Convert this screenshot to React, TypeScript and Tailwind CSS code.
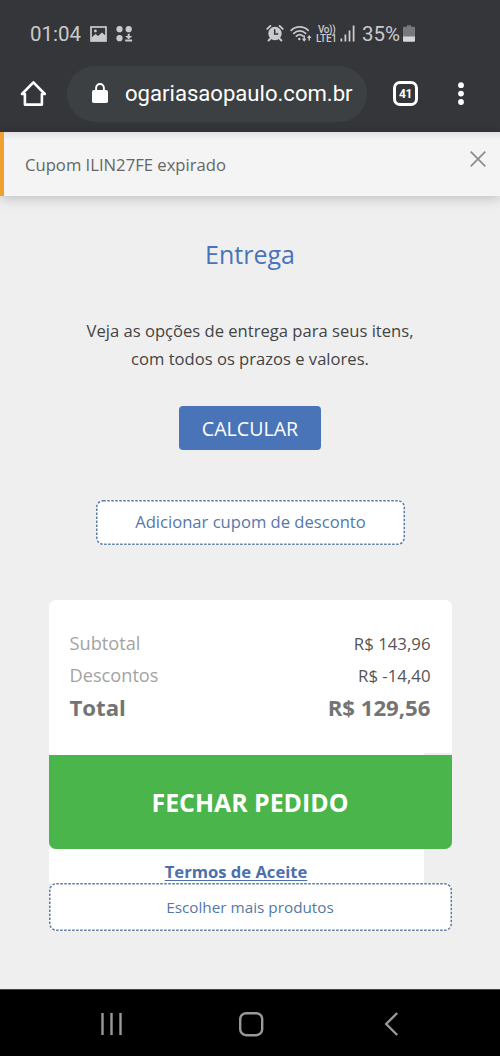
import { ReactNode } from "react";

function ImageIcon() {
  return (
    <svg className="ml-[9px] h-4 w-[17px]" viewBox="0 0 17 16" fill="none">
      <rect x="1" y="1" width="15" height="14" stroke="#c9cacc" strokeWidth="1.7" />
      <path d="M1.5 11.5 5.5 8l2.5 2 4-3.5 4 3.5v5H1.5Z" fill="#c9cacc" />
      <circle cx="5.4" cy="5" r="1.4" fill="#c9cacc" />
    </svg>
  );
}

function AppsIcon() {
  return (
    <svg className="ml-[9px] h-[17px] w-[17px]" viewBox="0 0 17 17" fill="#c9cacc">
      <circle cx="3.5" cy="3.2" r="3.1" />
      <circle cx="12.7" cy="3.2" r="3.1" />
      <circle cx="3.5" cy="12.2" r="3.1" />
      <path d="M11.7 7.8h2v2.2h2.6l-3.6 3.2-3.6-3.2h2.6ZM9.3 13.5h6.8v1.9H9.3Z" />
    </svg>
  );
}

function AlarmIcon() {
  return (
    <svg className="h-[18px] w-[18px]" viewBox="0 0 18 18" fill="none" stroke="#c9cacc" strokeLinecap="round">
      <circle cx="9" cy="8.5" r="6.7" fill="#c9cacc" stroke="none" />
      <path d="M1.3 3.9 4.4 0.9M13.6 0.9l3.1 3M2.6 15.5l2-2M15.4 15.5l-2-2" strokeWidth="1.9" />
      <path d="M8.7 4.7v4.2h3" stroke="#35363a" strokeWidth="1.5" />
    </svg>
  );
}

function WifiIcon() {
  return (
    <svg className="ml-[6px] h-[18px] w-[22px]" viewBox="0 0 22 18" fill="none" stroke="#c9cacc" strokeWidth="1.7" strokeLinecap="round">
      <path d="M1.2 5.3C6 .7 13.4.7 18.2 5.3M3.8 8.3c3.4-3.3 8.4-3.3 11.8 0M6.4 11.2c1.9-1.7 4.7-1.7 6.5-.2" />
      <circle cx="9.3" cy="14" r="1.2" fill="#c9cacc" stroke="none" />
      <path d="M14.2 11v4" strokeWidth="1.5" />
      <path d="M11.9 13.8h4.6L14.2 16.8Z" fill="#c9cacc" stroke="none" />
      <path d="M19.2 15v-3" strokeWidth="1.5" />
      <path d="M16.9 12.9h4.6L19.2 10Z" fill="#c9cacc" stroke="none" />
    </svg>
  );
}

function SignalIcon() {
  return (
    <svg className="ml-[3px] h-[18px] w-[16px]" viewBox="0 0 16 18" fill="#c9cacc">
      <rect x="0.5" y="13.5" width="1.8" height="3" />
      <rect x="4.5" y="9.5" width="1.8" height="7" />
      <rect x="8.6" y="5.5" width="1.8" height="11" />
      <rect x="12.7" y="0.5" width="1.8" height="16" />
    </svg>
  );
}

function BatteryIcon() {
  return (
    <svg className="ml-[3px] h-[18px] w-[12px]" viewBox="0 0 12 18">
      <path d="M4 .2h4v1.6h3a1 1 0 0 1 1 1V12H0V2.8a1 1 0 0 1 1-1h3Z" fill="#77787b" />
      <path d="M0 11.5h12v4.2a1 1 0 0 1-1 1H1a1 1 0 0 1-1-1Z" fill="#d6d7d9" />
    </svg>
  );
}

function StatusBar() {
  return (
    <div className="flex h-[60px] items-center pt-2 pl-[30px] font-[Roboto,sans-serif] text-[#c9cacc]">
      <span className="w-[51px] text-[20.5px] leading-none">01:04</span>
      <ImageIcon />
      <AppsIcon />
      <div className="ml-[133px] flex items-center">
        <AlarmIcon />
        <WifiIcon />
        <div className="ml-[4px] flex w-[21px] flex-col text-[10px] leading-[9px] font-medium whitespace-nowrap">
          <span className="pl-[2px] tracking-[-0.4px]">Vo))</span>
          <span className="tracking-[-0.2px]">LTE1</span>
        </div>
        <SignalIcon />
        <span className="ml-[6px] w-[38px] text-[20.5px] leading-none">35%</span>
        <BatteryIcon />
      </div>
    </div>
  );
}

function BrowserBar() {
  return (
    <div className="flex h-[72px] items-center pb-[5px] pl-[20px] font-[Roboto,sans-serif] text-white">
      <svg className="h-[27px] w-[27px]" viewBox="0 0 27 27" fill="none" stroke="#fff" strokeWidth="2.6" strokeLinejoin="round">
        <path d="M2 14 13.4 2.4 24.8 14H21.9V24.6H4.9V14Z" />
      </svg>
      <div className="ml-[20px] flex h-[56px] w-[300px] items-center rounded-full bg-[#3c4043] pl-[25px]">
        <svg className="h-[22px] w-[16px]" viewBox="0 0 16 22" fill="none">
          <rect x="0" y="7" width="16" height="13" rx="1.8" fill="#fff" />
          <path d="M4.1 7.5V4.9a3.9 3.9 0 0 1 7.8 0V7.5" stroke="#fff" strokeWidth="1.9" />
        </svg>
        <span className="ml-[17px] text-[22.1px] leading-none whitespace-nowrap">ogariasaopaulo.com.br</span>
      </div>
      <div className="ml-[26px] flex h-[25px] w-[25px] items-center justify-center rounded-[7px] border-[3px] border-white text-[12px] leading-none font-bold tracking-[-0.3px]">
        41
      </div>
      <svg className="ml-[39px] h-[24px] w-[8px]" viewBox="0 0 8 24" fill="#fff">
        <circle cx="4" cy="3.2" r="2.9" />
        <circle cx="4" cy="11.6" r="2.9" />
        <circle cx="4" cy="20" r="2.9" />
      </svg>
    </div>
  );
}

function CouponAlert() {
  return (
    <div className="relative flex h-16 items-center justify-between border-l-4 border-[#f0a030] bg-[#f4f4f4] pl-[21px] shadow-[0_2px_12px_rgba(0,0,0,0.22)]">
      <div className="absolute inset-x-0 top-0 h-2 bg-gradient-to-b from-[#e2e2e2] to-[#f4f4f4]" />
      <span className="pt-[3px] text-[16.65px] text-[#666]">Cupom ILIN27FE expirado</span>
      <svg className="mr-[14px] mb-[11px] h-[16px] w-[16px]" viewBox="0 0 16 16" stroke="#8c8c8c" strokeWidth="1.7">
        <path d="M.7.7l14.6 14.6M15.3.7.7 15.3" />
      </svg>
    </div>
  );
}

function DashedButton({ className, children }: { className: string; children: ReactNode }) {
  return (
    <button className={`relative flex items-center justify-center rounded-[7px] bg-white text-[#5578a8] ${className}`}>
      <svg className="absolute inset-0 h-full w-full overflow-visible" fill="none" stroke="#5c7ba4" strokeWidth="1.5" strokeDasharray="2.5 1.5">
        <rect className="h-[calc(100%-1.5px)] w-[calc(100%-1.5px)]" x="0.75" y="0.75" rx="6.5" />
      </svg>
      {children}
    </button>
  );
}

const rows = [
  { label: "Subtotal", value: "R$ 143,96" },
  { label: "Descontos", value: "R$ -14,40" },
];

function Summary() {
  return (
    <div className="mt-[55px] w-[403px]">
      <div className="h-[155px] rounded-t-[7px] bg-white px-[21px] pt-[28px]">
        {rows.map((row) => (
          <div key={row.label} className="flex h-8 items-center justify-between">
            <span className="text-[18.2px] text-[#a3a3a3]">{row.label}</span>
            <span className="text-[16.8px] text-[#555]">{row.value}</span>
          </div>
        ))}
        <div className="flex h-[31px] items-center justify-between text-[22.2px] font-bold text-[#747474]">
          <span>Total</span>
          <span>{"R$ 129,56"}</span>
        </div>
        <div className="mt-[30px] -mr-[21px] ml-auto h-[2px] w-[28px] bg-[#efefef]" />
      </div>
      <button className="flex h-[94px] w-full items-center justify-center rounded-b-[7px] bg-[#4ab54a] pt-px text-[24.9px] font-bold text-white">
        FECHAR PEDIDO
      </button>
      <div className="flex h-[34px] w-[375px] items-end justify-center bg-white text-[16.6px] leading-[22px] font-bold text-[#4b70ad]">
        <a className="underline underline-offset-2">Termos de Aceite</a>
      </div>
      <DashedButton className="h-[48px] w-full text-[15.3px]">Escolher mais produtos</DashedButton>
    </div>
  );
}

function NavBar() {
  return (
    <nav className="flex h-[67px] items-center border-t border-[#444] bg-black pt-[2px] pl-[100px]">
      <svg className="h-6 w-6" viewBox="0 0 24 24" stroke="#999" strokeWidth="2.4">
        <path d="M2.5 1v22M11.5 1v22M20.5 1v22" />
      </svg>
      <svg className="ml-[114px] h-[26px] w-[26px]" viewBox="0 0 26 26" fill="none" stroke="#999" strokeWidth="2.4">
        <rect x="2.2" y="2.2" width="22" height="22" rx="6" />
      </svg>
      <svg className="ml-[119px] h-6 w-[16px]" viewBox="0 0 16 24" fill="none" stroke="#999" strokeWidth="2.4">
        <path d="M14.2 1 3.2 12l11 11" />
      </svg>
    </nav>
  );
}

export default function App() {
  return (
    <div className="flex h-[1056px] w-[500px] flex-col overflow-hidden bg-[#efefef] font-['Open_Sans',sans-serif]">
      <header className="h-[132px] bg-[#35363a]">
        <StatusBar />
        <BrowserBar />
      </header>
      <CouponAlert />
      <main className="flex flex-1 flex-col items-center">
        <h1 className="mt-[40px] text-[25px] leading-[36px] text-[#4b73b9]">Entrega</h1>
        <p className="mt-[45px] text-center text-[16.6px] leading-[28px] text-[#444]">
          Veja as opções de entrega para seus itens,
          <br />
          com todos os prazos e valores.
        </p>
        <button className="mt-[33px] h-[44px] w-[142px] rounded-[4px] bg-[#4a74b8] pt-px text-[19.6px] text-white">CALCULAR</button>
        <DashedButton className="mt-[50px] ml-px h-[45px] w-[309px] text-[16.6px]">Adicionar cupom de desconto</DashedButton>
        <Summary />
      </main>
      <NavBar />
    </div>
  );
}
